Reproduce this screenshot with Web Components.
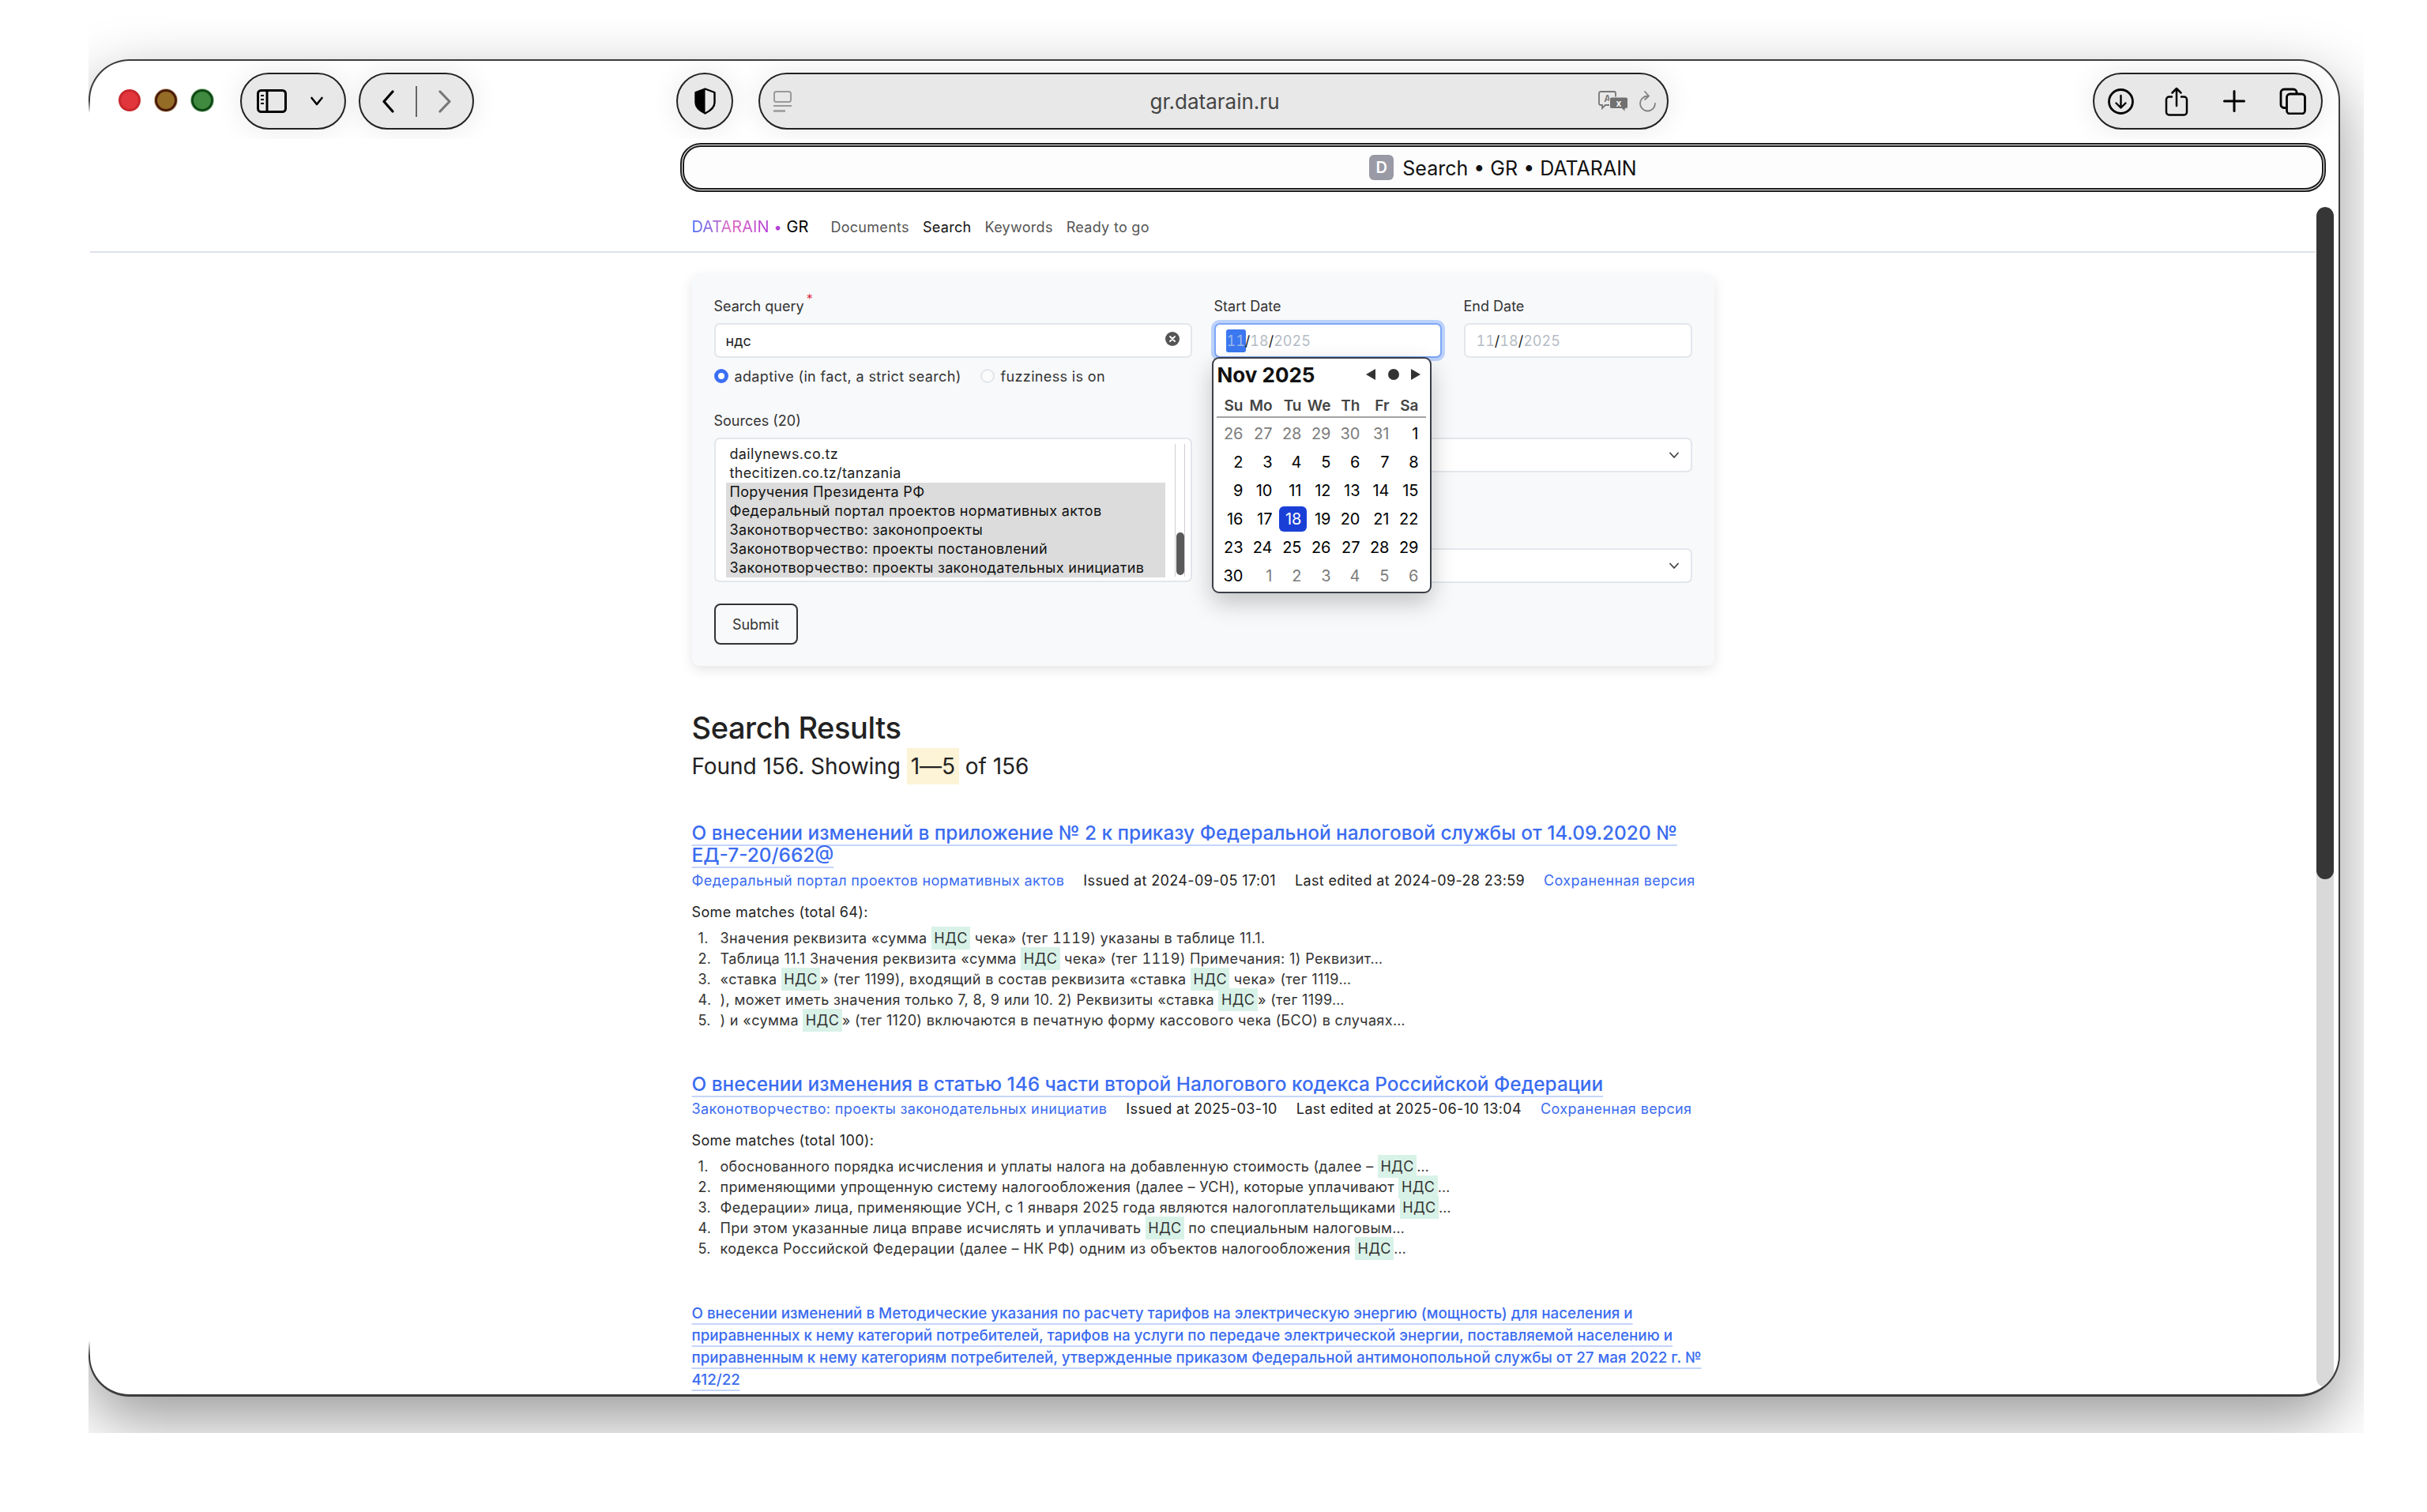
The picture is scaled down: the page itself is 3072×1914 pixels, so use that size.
<!DOCTYPE html>
<html lang="ru"><head><meta charset="utf-8"><title>Search • GR • DATARAIN</title>
<style>
html,body{margin:0;background:#fff;font-family:Inter,"Noto Sans",sans-serif;color:#222}
body{width:3072px;height:1914px;overflow:hidden}
</style></head><body>
<dr-desktop>
  <dr-toolbar></dr-toolbar>
  <dr-tabbar title-text="Search • GR • DATARAIN"></dr-tabbar>
  <dr-sitenav></dr-sitenav>
  <dr-page>
    <dr-search-form></dr-search-form>
    <dr-summary></dr-summary>
    <dr-result style="--ls:.37px" title-size="24.4" gap="50" meta-gap="7" title-text="О внесении изменений в приложение № 2 к приказу Федеральной налоговой службы от 14.09.2020 № ЕД-7-20/662@" source="Федеральный портал проектов нормативных актов" issued="2024-09-05 17:01" edited="2024-09-28 23:59" total="64">
      <dr-match n="1">Значения реквизита «сумма <dr-hit>НДС</dr-hit> чека» (тег <dr-num>1119</dr-num>) указаны в таблице 11.1.</dr-match>
      <dr-match n="2">Таблица 11.1 Значения реквизита «сумма <dr-hit>НДС</dr-hit> чека» (тег <dr-num>1119</dr-num>) Примечания: 1) Реквизит…</dr-match>
      <dr-match n="3">«ставка <dr-hit>НДС</dr-hit>» (тег 1199), входящий в состав реквизита «ставка <dr-hit>НДС</dr-hit> чека» (тег 1119…</dr-match>
      <dr-match n="4">), может иметь значения только 7, 8, 9 или 10. 2) Реквизиты «ставка <dr-hit>НДС</dr-hit>» (тег 1199…</dr-match>
      <dr-match n="5">) и «сумма <dr-hit>НДС</dr-hit>» (тег 1120) включаются в печатную форму кассового чека (БСО) в случаях…</dr-match>
    </dr-result>
    <dr-result style="--ls:.33px" title-size="24.4" gap="53" meta-gap="6" title-text="О внесении изменения в статью 146 части второй Налогового кодекса Российской Федерации" source="Законотворчество: проекты законодательных инициатив" issued="2025-03-10" edited="2025-06-10 13:04" total="100">
      <dr-match n="1">обоснованного порядка исчисления и уплаты налога на добавленную стоимость (далее – <dr-hit>НДС</dr-hit>…</dr-match>
      <dr-match n="2">применяющими упрощенную систему налогообложения (далее – УСН), которые уплачивают <dr-hit>НДС</dr-hit>…</dr-match>
      <dr-match n="3">Федерации» лица, применяющие УСН, с 1 января 2025 года являются налогоплательщиками <dr-hit>НДС</dr-hit>…</dr-match>
      <dr-match n="4">При этом указанные лица вправе исчислять и уплачивать <dr-hit>НДС</dr-hit> по специальным налоговым…</dr-match>
      <dr-match n="5">кодекса Российской Федерации (далее – НК РФ) одним из объектов налогообложения <dr-hit>НДС</dr-hit>…</dr-match>
    </dr-result>
    <dr-result title-size="18.8" gap="55" meta-gap="6" title-text="О внесении изменений в Методические указания по расчету тарифов на электрическую энергию (мощность) для населения и приравненных к нему категорий потребителей, тарифов на услуги по передаче электрической энергии, поставляемой населению и приравненным к нему категориям потребителей, утвержденные приказом Федеральной антимонопольной службы от 27 мая 2022 г. № 412/22"></dr-result>
  </dr-page>
</dr-desktop>
<script>
const FONT='Inter,"Noto Sans",sans-serif';
function def(name,css,html,setup){
  customElements.define(name,class extends HTMLElement{
    connectedCallback(){
      if(this.shadowRoot)return;
      const r=this.attachShadow({mode:'open'});
      const h=typeof html==='function'?html(this):html;
      r.innerHTML='<style>'+css+'</style>'+h;
      if(setup)setup(this,r);
    }
  });
}
def('dr-desktop',`
:host{display:block;font-family:${FONT}}
.clip{position:relative;margin:20px 0 0 112px;width:2880px;height:1794px;overflow:hidden;padding-top:55px;box-sizing:border-box}
.win{width:2850px;height:1693px;box-sizing:border-box;border:solid #3c3c3c;border-width:2px 2px 3px 2px;border-radius:52px;background:#fff;overflow:hidden;position:relative;box-shadow:0 30px 80px rgba(0,0,0,.4)}
.seam{position:absolute;left:0;top:107px;width:2px;height:1590px;background:linear-gradient(to bottom,transparent,#fff 16px,#fff calc(100% - 20px),transparent)}
.bar{position:absolute;right:6px;top:185px;bottom:9px;width:22px;border-radius:11px;background:#d9d9d9;overflow:hidden}
.thumb{height:851px;border-radius:11px;background:#363636}
`,`<div class="clip"><div class="win"><slot></slot><div class="bar"><div class="thumb"></div></div></div><div class="seam"></div></div>`);

const ic={
 sidebar:`<svg width="38" height="30" viewBox="0 0 38 30" fill="none" stroke="#000" stroke-width="3"><rect x="1.5" y="1.5" width="35" height="27" rx="4"/><path d="M13 2v26"/><path d="M5 8h4M5 13h4M5 18h4" stroke-width="2.2"/></svg>`,
 down:`<svg width="18" height="12" viewBox="0 0 18 12" fill="none" stroke="#000" stroke-width="2.6" stroke-linecap="round" stroke-linejoin="round"><path d="M2.5 2 9 10l6.5-8"/></svg>`,
 left:`<svg width="15" height="29" viewBox="0 0 15 29" fill="none" stroke="#000" stroke-width="3.2" stroke-linecap="round" stroke-linejoin="round"><path d="M13 2 2 14.500 13 27"/></svg>`,
 right:`<svg width="16" height="29" viewBox="0 0 16 29" fill="none" stroke="#777" stroke-width="3.200" stroke-linecap="round" stroke-linejoin="round"><path d="M2 2l12 12.500L2 27"/></svg>`,
 shield:`<svg width="27" height="34" viewBox="0 0 27 34" fill="none" stroke="#000" stroke-width="2.400" stroke-linejoin="round"><path d="M13.500 1.500 25.500 6v13c0 6.500-6 10.500-12 13.500-6-3-12-7-12-13.500V6z"/><path fill="#000" stroke="none" d="M13.500 1.500V32.500C7.500 29.500 1.500 25.500 1.500 19V6z"/></svg>`,
 page:`<svg width="23" height="27" viewBox="0 0 23 27" fill="none" stroke="#9a9a9a"><rect x="1" y="1" width="21" height="13" rx="2.500" stroke-width="2"/><path d="M0 19h23" stroke-width="2"/><path d="M0 25.500h15" stroke-width="2.600"/></svg>`,
 translate:`<svg width="38" height="27" viewBox="0 0 38 27" font-family="Inter,sans-serif" font-weight="600"><path d="M3 1h17a2 2 0 0 1 2 2v13a2 2 0 0 1-2 2H9l-4 4v-4H3a2 2 0 0 1-2-2V3a2 2 0 0 1 2-2z" fill="#e8e8e8" stroke="#777" stroke-width="1.800"/><text x="11.500" y="14" font-size="12" text-anchor="middle" fill="#777">A</text><path d="M17 8h18a2.500 2.500 0 0 1 2.500 2.500V20a2.500 2.500 0 0 1-2.500 2.500h-1v4l-4-4H17a2.500 2.500 0 0 1-2.500-2.500v-9.500A2.500 2.500 0 0 1 17 8z" fill="#707070" stroke="#e8e8e8" stroke-width="1"/><text x="26" y="20" font-size="12" text-anchor="middle" fill="#fff">x</text></svg>`,
 reload:`<svg width="22" height="27" viewBox="0 0 22 27" fill="none" stroke="#808080" stroke-width="1.800" stroke-linecap="round" stroke-linejoin="round"><path d="M11.500 6.500A9.500 9.500 0 1 0 21 16"/><path d="M8 1l5 5.500-5 4.500"/></svg>`,
 dl:`<svg width="33" height="33" viewBox="0 0 33 33" fill="none" stroke="#000" stroke-width="2.800" stroke-linecap="round" stroke-linejoin="round"><circle cx="16.500" cy="16.500" r="15"/><path d="M16.500 9v15M10.500 18.500l6 6 6-6" stroke-width="2.400"/></svg>`,
 share:`<svg width="30" height="37" viewBox="0 0 30 37" fill="none" stroke="#000" stroke-width="2.500" stroke-linecap="round" stroke-linejoin="round"><path d="M9 12.500H5.500a3.500 3.500 0 0 0-3.500 3.500v16a3.500 3.500 0 0 0 3.500 3.500h19a3.500 3.500 0 0 0 3.500-3.500V16a3.500 3.500 0 0 0-3.500-3.500H21"/><path d="M15 2v22M9.500 7.500 15 2l5.500 5.500"/></svg>`,
 plus:`<svg width="28" height="28" viewBox="0 0 28 28" stroke="#000" stroke-width="3" stroke-linecap="round"><path d="M14 1.500v25M1.500 14h25"/></svg>`,
 tabs:`<svg width="34" height="34" viewBox="0 0 34 34" fill="none" stroke="#000" stroke-width="2.800" stroke-linejoin="round"><path d="M8 25.500H6a4 4 0 0 1-4-4V6a4 4 0 0 1 4-4h12a4 4 0 0 1 4 4v1.500"/><rect x="9.500" y="8" width="23" height="25" rx="4"/></svg>`
};
const cap=`background:#e8e8e8;border:2px solid #222;box-sizing:border-box;height:72px;border-radius:36px;display:flex;align-items:center;flex:none;box-shadow:0 0 36px rgba(0,0,0,.09)`;
def('dr-toolbar',`
:host{display:block;height:99px;overflow:hidden}
.row{display:flex;align-items:flex-start;padding:15px 0 0 36px;box-sizing:border-box;height:120px}
.lights{display:flex;gap:18px;margin:21px 34px 0 0;flex:none}
.l{width:28px;height:28px;border-radius:50%;box-sizing:border-box;border:3px solid}
.r{background:#e0363c;border-color:#c8282e}
.y{background:#956c25;border-color:#4a1a08;box-shadow:0 0 0 1px rgba(150,108,37,.45)}
.g{background:#3f8a3f;border-color:#0f4a14;box-shadow:0 0 0 1px rgba(62,138,62,.45)}
.side{${cap};width:134px;padding-left:19px;gap:29px}
.nav{${cap};width:146px;margin-left:16px;padding-left:28px}
.nav i{display:block;width:2px;height:39px;background:#666;margin:0 27px}
.sh{${cap};width:72px;margin-left:256px;justify-content:center}
.url{${cap};width:1152px;margin-left:32px;display:grid;grid-template-columns:1fr auto 1fr;padding:0 14px 0 17px;font-size:26px;color:#444}
.url .rt{display:flex;justify-content:flex-end;align-items:center;gap:13px}
.url .lf{display:flex}
.acts{${cap};width:291px;margin-left:537px;padding-left:17px}
.acts svg{display:block}
`,`<div class="row">
<div class="lights"><div class="l r"></div><div class="l y"></div><div class="l g"></div></div>
<div class="side">${ic.sidebar}${ic.down}</div>
<div class="nav">${ic.left}<i></i>${ic.right}</div>
<div class="sh">${ic.shield}</div>
<div class="url"><div class="lf">${ic.page}</div><div>gr.datarain.ru</div><div class="rt">${ic.translate}${ic.reload}</div></div>
<div class="acts">${ic.dl}<span style="width:39px"></span>${ic.share}<span style="width:44px"></span>${ic.plus}<span style="width:43px"></span>${ic.tabs}</div>
</div>`);

def('dr-tabbar',`
:host{display:block;margin:5px 16px 0 747px}
.t{height:62px;box-sizing:border-box;border:5px double #1c1c1c;border-radius:26px;background:#fdfdfd;display:flex;align-items:center;justify-content:center;gap:11px;font-size:25px;color:#111}
.t span:last-child{padding-top:2px}
.f{width:31px;height:32px;border-radius:6px;background:#9a9aa6;color:#fff;font-size:20px;font-weight:600;display:flex;align-items:center;justify-content:center}
`,h=>`<div class="t"><span class="f">D</span><span>${h.getAttribute('title-text')}</span></div>`);

def('dr-sitenav',`
:host{display:block;height:75px;border-bottom:2px solid #dfe3e8;margin-right:29px}
.n{height:75px;box-sizing:border-box;padding:0 0 0 761.500px;display:flex;align-items:center;font-size:18px;color:#555;padding-top:13px}
.b{font-size:20px;background:linear-gradient(90deg,#4a6cf8 0%,#e068c0 50%,#b53fd8 100%);-webkit-background-clip:text;background-clip:text;color:transparent}
.d{color:#b53fd8;margin:0 6px}
.g{color:#000;margin-right:28px;font-size:20px}
a{margin-right:17px;color:#555;text-decoration:none;letter-spacing:.3px}
a.on{color:#111}
`,`<div class="n"><span class="b">DATARAIN</span><span class="d">•</span><span class="g">GR</span><a>Documents</a><a class="on">Search</a><a>Keywords</a><a>Ready to go</a></div>`);

def('dr-page',`
:host{display:block;width:2819px;box-sizing:border-box;padding:27px 763.500px 0 761.500px;height:1447px;overflow:hidden}
`,`<slot></slot>`);

const field=`background:#fff;border:2px solid #e3e6eb;border-radius:7px;box-sizing:border-box`;
def('dr-date',`
:host{display:block;position:relative;font-size:18px}
.i{${field};height:44px;display:flex;align-items:center;padding-left:14px;color:#b6bcc6;font-variant-numeric:tabular-nums}
:host([active]) .i{border-color:#7da6f7;box-shadow:0 0 0 4px #bcd2fb}
.s{color:#222}
.m{border-radius:3px;padding:4px 1px;margin:0 -1px}
:host([active]) .m{background:#3b78f0;color:#9cb8ea}
`,`<div class="i"><span class="m">11</span><span class="s">/</span>18<span class="s">/</span>2025</div><slot></slot>`);

def('dr-radio',`
:host{display:inline-flex;align-items:center;gap:8px;font-size:18px;color:#333;letter-spacing:.35px}
.o{width:18px;height:18px;border-radius:50%;background:#fbfbfc;border:2px solid #e3e5ea;box-sizing:border-box}
:host([on]) .o{background:#fff;border:5px solid #3b6ff5}
`,`<span class="o"></span><slot></slot>`);

def('dr-calendar',`
:host{display:block;position:absolute;left:-3px;top:43px;width:278px;height:299px;box-sizing:border-box;border:2px solid #3b3f48;border-radius:9px;background:#fff;box-shadow:0 12px 30px rgba(0,0,0,.22);z-index:5;color:#000;padding:0 0 0 4px;font-variant-numeric:normal}
.top{height:40px;display:flex;align-items:center;padding-right:12px;margin-left:1px}
.mon{font-size:26px;font-weight:700;flex:1;color:#111}
.tl{width:0;height:0;border-style:solid;border-width:7px 12px 7px 0;border-color:transparent #333 transparent transparent}
.tr{width:0;height:0;border-style:solid;border-width:7px 0 7px 12px;border-color:transparent transparent transparent #333}
.dot{width:14px;height:14px;border-radius:50%;background:#333;margin:0 15px 0 16px}
.g{display:grid;grid-template-columns:repeat(7,37px);font-size:20px;text-align:right}
.h{margin-top:5px;height:30px;line-height:30px;font-size:19px;font-weight:600;color:#444;white-space:nowrap}
.h span{padding-right:3px}
.rule{width:265px;height:2px;background:#a3a3a3;margin-bottom:1px;margin-top:-2px}
.g.d span{height:36px;line-height:36px;padding-right:3px;white-space:nowrap}
.g.d{margin-top:2px}
.x{color:#7c7c7c}
.d b{font-weight:400;display:inline-block;height:32px;line-height:32px;background:#1a3fd6;color:#fff;border-radius:6px;padding:0 6px 0 8px;margin-right:-6px}
`,()=>{
 const days=[26,27,28,29,30,31,1,2,3,4,5,6,7,8,9,10,11,12,13,14,15,16,17,18,19,20,21,22,23,24,25,26,27,28,29,30,1,2,3,4,5,6];
 const cells=days.map((d,i)=>{
  const out=i<6||i>35;
  if(d===18&&!out)return '<span><b>18</b></span>';
  return `<span class="${out?'x':''}">${d}</span>`;
 }).join('');
 return `<div class="top"><span class="mon">Nov 2025</span><span class="tl"></span><span class="dot"></span><span class="tr"></span></div>
 <div class="g h">${['Su','Mo','Tu','We','Th','Fr','Sa'].map(s=>`<span>${s}</span>`).join('')}</div><div class="rule"></div><div class="g d">${cells}</div>`;
});

def('dr-search-form',`
:host{display:block;background:#f8f9fb;border-radius:9px;box-shadow:0 5px 16px rgba(0,0,0,.1);padding:29px 28px 27px;font-size:18px;color:#333;height:496px;box-sizing:border-box}
.cols{display:flex;gap:28px}
.l{width:605px;flex:none}
.r{flex:1;display:flex;flex-direction:column}
label{display:block;height:24px;line-height:24px;margin-bottom:9px;font-size:18px;position:relative;color:#333}
sup{position:absolute;color:#e0344a;font-size:16px;line-height:1;top:-6px;margin-left:3px}
.q{${field};height:44px;display:flex;align-items:center;justify-content:space-between;padding:0 14px 0 13px;color:#222}
.q svg{display:block;margin-top:-4px;margin-right:0}
.radios{display:flex;gap:24px;margin-top:12px;height:22px}
.src{margin-top:34px}
.box{${field};height:183px;position:relative;padding:7px 0 0 13px;font-size:18px;line-height:24px;color:#222;letter-spacing:.35px}
.box div{padding-left:5px;width:551px;white-space:nowrap;line-height:24px;height:24px}
.box .sel{background:#dcdcdc;color:#111}
.track{position:absolute;left:581px;top:6px;bottom:5px;width:13px;box-sizing:border-box;border-left:1px solid #cfcfcf;border-right:1px solid #cfcfcf}
.track i{position:absolute;left:1px;right:0;bottom:2px;height:54px;background:#5a5a5a;border-radius:6px}
.btn{width:106px;height:52px;margin-top:27px;background:#f8f9fb;border:2px solid #333;border-radius:8px;box-sizing:border-box;display:flex;align-items:center;justify-content:center;font-size:18px}
.dates{display:flex;gap:28px}
.dates>div{flex:1;min-width:0}
.dates>div:first-child{flex:0 0 288px}
.sel2{${field};height:44px;display:flex;align-items:center;justify-content:flex-end;padding-right:14px}
.sel2 svg{display:block}
`,()=>{
 const chev=`<svg width="14" height="9" viewBox="0 0 14 9" fill="none" stroke="#444" stroke-width="1.800" stroke-linecap="round" stroke-linejoin="round"><path d="M2 1.500 7 7l5-5.500"/></svg>`;
 return `<div class="cols">
 <div class="l">
  <label>Search query<sup>*</sup></label>
  <div class="q"><span>ндс</span><svg width="18" height="18" viewBox="0 0 18 18"><circle cx="9" cy="9" r="9" fill="#555"/><path d="M6 6l6 6M12 6l-6 6" stroke="#fff" stroke-width="1.800" stroke-linecap="round"/></svg></div>
  <div class="radios"><dr-radio on>adaptive (in fact, a strict search)</dr-radio><dr-radio>fuzziness is on</dr-radio></div>
  <label class="src">Sources (20)</label>
  <div class="box">
   <div>dailynews.co.tz</div><div>thecitizen.co.tz/tanzania</div>
   <div class="sel">Поручения Президента РФ</div><div class="sel">Федеральный портал проектов нормативных актов</div><div class="sel">Законотворчество: законопроекты</div><div class="sel">Законотворчество: проекты постановлений</div><div class="sel">Законотворчество: проекты законодательных инициатив</div>
   <span class="track"><i></i></span>
  </div>
  <div class="btn">Submit</div>
 </div>
 <div class="r">
  <div class="dates">
   <div><label>Start Date</label><dr-date active><dr-calendar></dr-calendar></dr-date></div>
   <div><label>End Date</label><dr-date></dr-date></div>
  </div>
  <div class="sel2" style="margin-top:101px">${chev}</div>
  <div class="sel2" style="margin-top:96px">${chev}</div>
 </div></div>`;
});

def('dr-summary',`
:host{display:block;margin-top:54px;color:#222}
h2{margin:0;font-size:38px;font-weight:530;line-height:48px;letter-spacing:-.4px}
p{margin:5px 0 0;font-size:28px;line-height:40px;font-weight:430;letter-spacing:-.05px}
mark{background:#fdf3d6;color:inherit;padding:6px 5px}
`,`<h2>Search Results</h2><p>Found 156. Showing <mark>1—5</mark> of 156</p>`);

def('dr-result',`
:host{display:block;color:#222;font-size:18px;letter-spacing:.37px}
a{color:#3b6cf0;text-decoration:none}
h3{margin:0;line-height:28px;font-weight:500;color:#3b6cf0;letter-spacing:0}
h3 a{text-decoration:underline;text-decoration-color:#c5d5fb;text-decoration-thickness:2px;text-underline-offset:6px;text-decoration-skip-ink:none}
.meta{display:flex;gap:24px;line-height:24px;white-space:nowrap}
.total{margin-top:16px;line-height:24px;color:#222}
ol{margin:8px 0 0;padding:0;list-style:none;letter-spacing:var(--ls,.35px)}
`,h=>{
 const g=a=>h.getAttribute(a);
 const meta=g('source')?`<div class="meta" style="margin-top:${g('meta-gap')}px"><a>${g('source')}</a><span>Issued at ${g('issued')}</span><span>Last edited at ${g('edited')}</span><a>Сохраненная версия</a></div><div class="total">Some matches (total ${g('total')}):</div><ol><slot></slot></ol>`:'';
 return `<h3 style="font-size:${g('title-size')}px;margin-top:${g('gap')}px"><a>${g('title-text')}</a></h3>${meta}`;
});

def('dr-match',`
:host{display:flex;line-height:26px;height:26px;white-space:nowrap;color:#333}
.n{width:36px;flex:none;box-sizing:border-box;padding-left:8px}
`,h=>`<span class="n">${h.getAttribute('n')}.</span><span><slot></slot></span>`);

def('dr-hit',`
:host{display:inline;background:#d9f2e8;padding:4px 3.500px}
`,`<slot></slot>`);

def('dr-num',`
:host{display:inline;font-variant-numeric:tabular-nums}
`,`<slot></slot>`);
</script>
</body></html>
